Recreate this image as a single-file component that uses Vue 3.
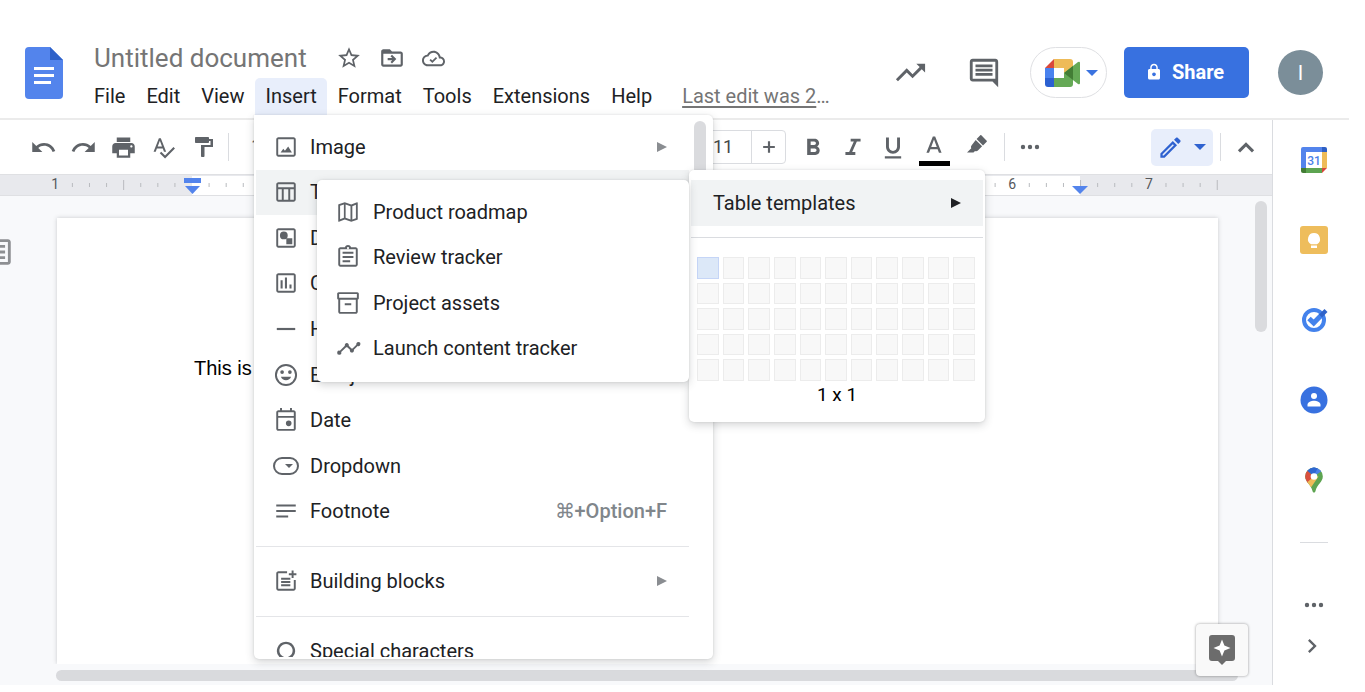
<script setup>
import { h } from 'vue'

const paths = {
  star: 'M22 9.24l-7.19-.62L12 2 9.19 8.63 2 9.24l5.46 4.73L5.82 21 12 17.27 18.18 21l-1.63-7.03L22 9.24zM12 15.4l-3.76 2.27 1-4.28-3.32-2.88 4.38-.38L12 6.1l1.71 4.04 4.38.38-3.32 2.88 1 4.28L12 15.4z',
  move: 'M20 6h-8l-2-2H4c-1.1 0-2 .9-2 2v12c0 1.1.9 2 2 2h16c1.1 0 2-.9 2-2V8c0-1.1-.9-2-2-2zm0 12H4V8h16v10zM12 17l4-4-4-4-1.4 1.4 1.6 1.6H8v2h4.2l-1.6 1.6z',
  cloud: 'M19.35 10.04C18.67 6.59 15.64 4 12 4 9.11 4 6.61 5.64 5.36 8.04 2.35 8.36 0 10.9 0 14c0 3.31 2.69 6 6 6h13c2.76 0 5-2.24 5-5 0-2.64-2.05-4.78-4.65-4.96zM19 18H6c-2.21 0-4-1.79-4-4 0-2.05 1.53-3.76 3.56-3.97l1.07-.11.5-.95C8.08 7.14 9.94 6 12 6c2.62 0 4.88 1.86 5.39 4.43l.3 1.5 1.53.11c1.56.1 2.78 1.41 2.78 2.96 0 1.65-1.35 3-3 3zm-8.2-3.9l-1.7-1.7L7.8 13.7l3 3 5-5-1.3-1.3z',
  trend: 'M16 6l2.29 2.29-4.88 4.88-4-4L2 16.59 3.41 18l6-6 4 4 6.3-6.29L22 12V6z',
  comment: 'M21.99 4c0-1.1-.89-2-1.99-2H4c-1.1 0-2 .9-2 2v12c0 1.1.9 2 2 2h14l4 4-.01-18zM20 4v12H4V4h16zM6 12h12v2H6zm0-3h12v2H6zm0-3h12v2H6z',
  lock: 'M18 8h-1V6c0-2.76-2.24-5-5-5S7 3.24 7 6v2H6c-1.1 0-2 .9-2 2v10c0 1.1.9 2 2 2h12c1.1 0 2-.9 2-2V10c0-1.1-.9-2-2-2zm-6 9.500c-1.400 0-2.500-1.100-2.500-2.500s1.100-2.500 2.500-2.500 2.500 1.100 2.500 2.500-1.100 2.500-2.500 2.500zM15.100 8H8.900V6c0-1.710 1.390-3.100 3.100-3.100s3.100 1.390 3.100 3.100v2z',
  undo: 'M12.5 8c-2.65 0-5.05.99-6.900 2.600L2 7v9h9l-3.620-3.620c1.390-1.160 3.160-1.880 5.120-1.880 3.540 0 6.550 2.310 7.600 5.500l2.370-.780C21.080 11.030 17.150 8 12.500 8z',
  redo: 'M18.4 10.6C16.55 8.99 14.15 8 11.5 8c-4.65 0-8.58 3.03-9.96 7.22L3.9 16c1.05-3.19 4.05-5.5 7.6-5.5 1.95 0 3.73.72 5.12 1.88L13 16h9V7l-3.6 3.6z',
  print: 'M19 8H5c-1.66 0-3 1.34-3 3v6h4v4h12v-4h4v-6c0-1.66-1.34-3-3-3zm-3 11H8v-5h8v5zm3-7c-.55 0-1-.45-1-1s.45-1 1-1 1 .45 1 1-.45 1-1 1zm-1-9H6v4h12V3z',
  spell: 'M12.45 16h2.09L9.43 3H7.57L2.46 16h2.09l1.12-3h5.64l1.14 3zm-6.02-5L8.5 5.48 10.57 11H6.43zm15.16.59l-8.09 8.09L9.83 16l-1.41 1.41 5.09 5.09L23 13l-1.41-1.41z',
  paint: 'M18 4V3c0-.55-.45-1-1-1H5c-.55 0-1 .45-1 1v4c0 .55.45 1 1 1h12c.55 0 1-.45 1-1V6h1.500v4H10v11c0 .55.45 1 1 1h1.500c.55 0 1-.45 1-1v-9H22V4h-4z',
  bold: 'M15.6 10.79c.97-.67 1.65-1.77 1.65-2.79 0-2.26-1.75-4-4-4H7v14h7.04c2.09 0 3.71-1.7 3.71-3.79 0-1.52-.86-2.82-2.15-3.42zM10 6.5h3c.83 0 1.5.67 1.5 1.5s-.67 1.5-1.5 1.5h-3v-3zm3.5 9H10v-3h3.500c.83 0 1.500.67 1.500 1.500s-.67 1.500-1.500 1.500z',
  italic: 'M10 4v2.500h2.700l-4 9H5.500V18h8.500v-2.500h-2.700l4-9H18.500V4z',
  underline: 'M12 17c3.31 0 6-2.69 6-6V3h-2.500v8c0 1.930-1.570 3.500-3.500 3.500S8.500 12.930 8.500 11V3H6v8c0 3.310 2.690 6 6 6zm-7 2v2h14v-2H5z',
  color: 'M11 3L5.5 17h2.25l1.12-3h6.25l1.12 3h2.25L13 3h-2zm-1.38 9L12 5.67 14.38 12H9.62z',
  highlight: 'M16.300 2.300l5.400 5.400c.3.300.3.700 0 1L18 12.400 11.600 6l3.700-3.700c.3-.300.700-.300 1 0zM10.700 6.900l6.400 6.400-4.200 4.200c-.8.800-2 .900-2.900.4L8.500 19.500H2l4.300-4.300c-.5-.900-.4-2.100.4-2.900z',
  dots: 'M5 9.800a2.200 2.200 0 100 4.400 2.200 2.200 0 000-4.400zm7 0a2.200 2.200 0 100 4.400 2.200 2.200 0 000-4.400zm7 0a2.200 2.200 0 100 4.400 2.200 2.200 0 000-4.400z',
  pen: 'M14.060 9.020l.92.920L5.920 19H5v-.920l9.060-9.060M17.660 3c-.25 0-.51.100-.7.290l-1.830 1.830 3.750 3.750 1.830-1.830c.39-.390.39-1.020 0-1.410l-2.340-2.340c-.2-.200-.45-.290-.71-.290zm-3.600 3.190L3 17.250V21h3.750L17.810 9.940l-3.750-3.750z',
  up: 'M12 7.500l-7.500 7.500 2 2L12 11.500l5.500 5.500 2-2z',
  plus: 'M19 13.300h-5.700V19h-2.600v-5.700H5v-2.600h5.700V5h2.600v5.700H19z',
  right: 'M8.590 16.590L13.170 12 8.590 7.410 10 6l6 6-6 6z',
  image: 'M19 3H5c-1.100 0-2 .9-2 2v14c0 1.100.9 2 2 2h14c1.100 0 2-.9 2-2V5c0-1.100-.9-2-2-2zm.2 16.200H4.800V4.800h14.400v14.400zM7 17l2.500-3.500 1.500 2 3-4L17.500 17z',
  table: 'M19 3H5c-1.100 0-2 .9-2 2v14c0 1.100.9 2 2 2h14c1.100 0 2-.9 2-2V5c0-1.100-.9-2-2-2zm.2 1.800v2.900H4.800V4.800zM4.800 9.500h3.300v9.700H4.800zm5.100 9.700V9.500h4.200v9.700zm6 0V9.500h3.300v9.700z',
  drawing: 'M19 3H5c-1.100 0-2 .9-2 2v14c0 1.100.9 2 2 2h14c1.100 0 2-.9 2-2V5c0-1.100-.9-2-2-2zm.2 16.200H4.800V4.800h14.400zM10 6a3.600 3.600 0 100 7.200A3.600 3.600 0 0010 6zm2.300 6.300h5.500v5.500h-5.500z',
  chart: 'M19 3H5c-1.100 0-2 .9-2 2v14c0 1.100.9 2 2 2h14c1.100 0 2-.9 2-2V5c0-1.100-.9-2-2-2zm.2 16.200H4.800V4.800h14.400zM7 9.500h1.900v7.500H7zm4-2.500h1.900v10H11zm4.200 6.300h1.900V17h-1.900z',
  line: 'M3.500 11h17v2h-17z',
  emoji: 'M12 1.800a10.200 10.200 0 100 20.400 10.200 10.200 0 000-20.400zm0 18.600a8.400 8.400 0 110-16.800 8.400 8.400 0 010 16.800zM8.400 7.600a1.700 1.700 0 100 3.400 1.700 1.700 0 000-3.400zm7.200 0a1.700 1.700 0 100 3.400 1.700 1.700 0 000-3.400zM7.300 13.700h9.400c-.7 1.900-2.500 3.200-4.700 3.200s-4-1.300-4.700-3.200z',
  date: 'M19 3h-1.500V1h-1.800v2H8.300V1H6.500v2H5c-1.100 0-2 .9-2 2v15c0 1.100.9 2 2 2h14c1.100 0 2-.9 2-2V5c0-1.100-.9-2-2-2zm.2 17.200H4.800V10h14.400zm0-12H4.800V4.800h14.400zM14.500 12.500a2.600 2.600 0 100 5.200 2.600 2.600 0 000-5.200z',
  footnote: 'M3 6h18v1.800H3zm0 5.100h18v1.800H3zm0 5.100h11v1.800H3z',
  blocks: 'M13 3v1.800H4.800v14.400h14.400V11H21v8c0 1.100-.9 2-2 2H5c-1.100 0-2-.9-2-2V5c0-1.100.9-2 2-2zM17.200 2.200H19v2.600h2.600v1.800H19v2.600h-1.800V6.600h-2.600V4.800h2.600zM7.500 9h8.500v1.800H7.500zm0 3h8.500v1.800H7.500zm0 3h8.500v1.800H7.500z',
  omega: 'M12 4.500a7.300 7.300 0 00-4.500 13V19H4v2h6.500v-4.300a5.300 5.300 0 113 0V21H20v-2h-3.500v-1.500A7.300 7.300 0 0012 4.500z',
  map: 'M20.500 3l-.16.030L15 5.100 9 3 3.360 4.900c-.21.070-.36.250-.36.480V20.500c0 .280.22.500.5.500l.16-.030L9 18.900l6 2.100 5.640-1.900c.21-.070.36-.250.36-.480V3.500c0-.280-.22-.500-.5-.500zM8.200 17.300l-3.500 1.300V6.200l3.500-1.200zm6.100 1.600l-4.500-1.600V5.100l4.500 1.600zm5-1.200L16 18.900V6.700l3.300-1.300z',
  clipboard: 'M19 3h-4.180C14.400 1.840 13.300 1 12 1s-2.400.84-2.820 2H5c-1.100 0-2 .9-2 2v14c0 1.100.9 2 2 2h14c1.100 0 2-.9 2-2V5c0-1.100-.9-2-2-2zm-7-.2a1 1 0 110 2 1 1 0 010-2zm7.200 16.400H4.800V4.800h14.400zM7 7.200h10V9H7zm0 3.900h10v1.800H7zm0 3.900h7v1.800H7z',
  archive: 'M20.500 2h-17C2.500 2 2 2.700 2 3.500v4c0 .6.400 1.100 1 1.300V20c0 1.100.9 2 2 2h14c1.100 0 2-.9 2-2V8.800c.6-.2 1-.7 1-1.300v-4c0-.8-.5-1.500-1.500-1.500zm-1.300 18.200H4.800V9h14.400zM20.200 7.200H3.800V3.800h16.400zM9 12.200h6v1.800H9z',
  timeline: 'M21.500 6.500a1.900 1.900 0 00-1.800 2.500l-3.500 3.500a2 2 0 00-1 0l-2.500-2.500a1.900 1.900 0 10-3.600 0L4.500 14.600a1.900 1.900 0 101.200 1.200L10.300 11.200a2 2 0 001 0l2.500 2.500a1.900 1.900 0 103.600 0L20.900 10.200a1.900 1.900 0 10.6-3.700z',
  outline: 'M19 3H5c-1.100 0-2 .9-2 2v14c0 1.100.9 2 2 2h14c1.100 0 2-.9 2-2V5c0-1.100-.9-2-2-2zm0 16H5V5h14zM7 7h10v2H7zm0 4h10v2H7zm0 4h10v2H7z'
}

const Icon = (props) =>
  h('svg', { viewBox: '0 0 24 24', width: props.size, height: props.size, 'aria-hidden': 'true' },
    [h('path', { d: paths[props.name], fill: 'currentColor', 'fill-rule': 'evenodd' })])
Icon.props = ['name', 'size']

const menus = ['File', 'Edit', 'View', 'Insert', 'Format', 'Tools', 'Extensions', 'Help']
const leftTools = [['undo', 27, 'Undo'], ['redo', 27, 'Redo'], ['print', 27, 'Print'], ['spell', 25, 'Spelling'], ['paint', 24, 'Paint format']]
const formatTools = [['bold', 28, 'Bold'], ['italic', 28, 'Italic'], ['underline', 28, 'Underline']]
const insertItems = [
  { icon: 'image', label: 'Image', arrow: true },
  { icon: 'table', label: 'Table', active: true },
  { icon: 'drawing', label: 'Drawing' },
  { icon: 'chart', label: 'Chart' },
  { icon: 'line', label: 'Horizontal line' },
  { icon: 'emoji', label: 'Emoji' },
  { icon: 'date', label: 'Date' },
  { icon: 'dropdown', label: 'Dropdown' },
  { icon: 'footnote', label: 'Footnote', keys: '⌘+Option+F' }
]
const templates = [
  ['map', 'Product roadmap'],
  ['clipboard', 'Review tracker'],
  ['archive', 'Project assets'],
  ['timeline', 'Launch content tracker']
]

const inch = 136.7
const origin = 192
const ticks = []
for (let n = -7; n <= 60; n++) {
  if (n % 8 !== 0) ticks.push({ x: origin + (n * inch) / 8, tall: n % 4 === 0 })
}
const numbers = [[-1, 1], [1, 1], [2, 2], [3, 3], [4, 4], [5, 5], [6, 6], [7, 7]]
</script>

<template>
  <div class="app">
    <header class="header">
      <svg class="logo" viewBox="0 0 38 52" width="38" height="52" aria-label="Docs home">
        <path d="M4 0h21l13 13v35a4 4 0 0 1-4 4H4a4 4 0 0 1-4-4V4a4 4 0 0 1 4-4z" fill="#5384ec" />
        <path d="M25 0l13 13H25z" fill="#2f62c9" />
        <path d="M9 20h20v3H9zM9 27h20v3H9zM9 34h17v3H9z" fill="#fff" />
      </svg>
      <div class="heading">
        <div class="title-row">
          <h1>Untitled document</h1>
          <button class="plain" aria-label="Star"><Icon name="star" size="26" /></button>
          <button class="plain" aria-label="Move"><Icon name="move" size="26" /></button>
          <button class="plain" aria-label="Document status"><Icon name="cloud" size="23" /></button>
        </div>
        <nav class="menubar">
          <button v-for="m in menus" :key="m" :class="{ open: m === 'Insert' }">{{ m }}</button>
          <a href="#" class="last-edit"><span>Last edit was 2</span>…</a>
        </nav>
      </div>
      <div class="actions">
        <button class="plain" aria-label="Activity"><Icon name="trend" size="35" /></button>
        <button class="plain comments" aria-label="Comments"><Icon name="comment" size="34" /></button>
        <button class="meet" aria-label="Meet">
          <svg viewBox="0 0 36 28" width="36" height="28">
            <path d="M0 9l9-9v9z" fill="#d9473a" />
            <path d="M9 0h16a3 3 0 0 1 3 3v7l-9 4V9H9z" fill="#eebb58" />
            <path d="M0 9h9v10H0z" fill="#4a82ee" />
            <path d="M0 19h9v9H3a3 3 0 0 1-3-3z" fill="#2b60d1" />
            <path d="M9 19h10v-5l9 4v7a3 3 0 0 1-3 3H9z" fill="#65a956" />
            <path d="M19 14L33 3q2-1 2 1v20q0 2-2 1z" fill="#65a956" />
            <path d="M19 14l9-7v14z" fill="#437d35" />
          </svg>
          <svg viewBox="0 0 12 6" width="12" height="6"><path d="M0 0h12L6 6z" fill="#3a73e0" /></svg>
        </button>
        <button class="share"><Icon name="lock" size="18" />Share</button>
        <button class="avatar" aria-label="Account">I</button>
      </div>
    </header>

    <div class="body">
      <main class="workspace">
        <div class="toolbar">
          <button v-for="t in leftTools" :key="t[0]" class="tool" :aria-label="t[2]"><Icon :name="t[0]" :size="t[1]" /></button>
          <i class="rule"></i>
          <div class="zoom-level">100%</div>
          <div class="font-size">
            <input aria-label="Font size" value="11" />
            <button aria-label="Increase font size"><Icon name="plus" size="20" /></button>
          </div>
          <button v-for="t in formatTools" :key="t[0]" class="tool format" :aria-label="t[2]"><Icon :name="t[0]" :size="t[1]" /></button>
          <button class="tool text-color" aria-label="Text color"><Icon name="color" size="28" /><b></b></button>
          <button class="tool highlighter" aria-label="Highlight color"><Icon name="highlight" size="24" /></button>
          <i class="rule"></i>
          <button class="tool" aria-label="More"><Icon name="dots" size="24" /></button>
          <div class="toolbar-end">
            <button class="mode" aria-label="Editing mode"><Icon name="pen" size="27" />
              <svg viewBox="0 0 12 6" width="12" height="6"><path d="M0 0h12L6 6z" fill="#2f62d0" /></svg>
            </button>
            <i class="rule"></i>
            <button class="tool" aria-label="Hide the menus"><Icon name="up" size="26" /></button>
          </div>
        </div>

        <svg class="ruler" width="100%" height="22">
          <rect x="192" y="1" width="888" height="19" fill="#fff" />
          <rect v-for="t in ticks" :key="t.x" :x="t.x - 0.5" :y="t.tall ? 5 : 8" width="1" :height="t.tall ? 10 : 4" fill="#b9bbbf" />
          <text v-for="(n, i) in numbers" :key="i" :x="origin + n[0] * inch" y="14">{{ n[1] }}</text>
          <path d="M184 3h17v5h-17zM185 11h15l-7.500 8zM1072 11h16l-8 8z" fill="#5384ec" />
        </svg>

        <div class="canvas">
          <button class="outline" aria-label="Show outline"><Icon name="outline" size="34" /></button>
          <article class="page"><p>This is</p></article>
          <i class="v-thumb"></i>
          <i class="h-thumb"></i>
          <button class="explore" aria-label="Explore">
            <svg viewBox="0 0 26 30" width="26" height="30">
              <path d="M3 0h20a3 3 0 0 1 3 3v20a3 3 0 0 1-3 3h-6l-4 4-4-4H3a3 3 0 0 1-3-3V3a3 3 0 0 1 3-3z" fill="#6c6c6c" />
              <path d="M13 4.500l2.400 6.100 6.100 2.400-6.100 2.400L13 21.500l-2.400-6.100L4.500 13l6.100-2.400z" fill="#fff" />
            </svg>
          </button>
        </div>
      </main>

      <aside class="side">
        <button aria-label="Calendar">
          <svg viewBox="0 0 26 26" width="26" height="26">
            <path d="M2 0h19v5H5v16H0V2a2 2 0 0 1 2-2z" fill="#5384ec" />
            <path d="M21 0h3a2 2 0 0 1 2 2v3h-5z" fill="#2e5fc4" />
            <path d="M21 5h5v16h-5z" fill="#eebb58" />
            <path d="M0 21h5v5H2a2 2 0 0 1-2-2z" fill="#437d35" />
            <path d="M5 21h16v5H5z" fill="#5da451" />
            <path d="M21 21h5l-5 5z" fill="#d9473a" />
            <path d="M5 5h16v16H5z" fill="#fff" />
            <text x="13" y="17.500">31</text>
          </svg>
        </button>
        <button aria-label="Keep">
          <svg viewBox="0 0 28 28" width="28" height="28">
            <rect width="28" height="28" rx="3" fill="#eebd5c" />
            <path d="M14 7a6 6 0 0 0-3 11.200h6A6 6 0 0 0 14 7zM11 19.500h6v2.500h-6z" fill="#fff" />
          </svg>
        </button>
        <button aria-label="Tasks">
          <svg viewBox="0 0 28 28" width="28" height="28">
            <circle cx="14" cy="14" r="10" fill="none" stroke="#4382ec" stroke-width="4" />
            <path d="M9 12.500l4.700 4.500L23 7.500" fill="none" stroke="#4382ec" stroke-width="5" />
            <path d="M19 8.500l5.500-5.500 3 3-5.500 5.500z" fill="#2f62c9" />
          </svg>
        </button>
        <button aria-label="Contacts">
          <svg viewBox="0 0 28 28" width="28" height="28">
            <circle cx="14" cy="14" r="13.500" fill="#3871e0" />
            <circle cx="14" cy="10" r="3" fill="#fff" />
            <path d="M7.500 20.500v-1.800c0-2.700 4-4 6.500-4s6.500 1.300 6.500 4v1.800z" fill="#fff" />
          </svg>
        </button>
        <button aria-label="Maps">
          <svg viewBox="0 0 18 26" width="18" height="26">
            <defs><clipPath id="pin"><path d="M9 .5a8.800 8.800 0 0 0-8.800 9c0 5.500 5.500 7.500 7.300 14.500.5 2 2.500 2 3 0 1.800-7 7.300-9 7.300-14.500A8.800 8.800 0 0 0 9 .5z" /></clipPath></defs>
            <g clip-path="url(#pin)">
              <path d="M0 0h18v26H0z" fill="#5da451" />
              <path d="M9 9.500L18 3V0H6z" fill="#4a80e8" />
              <path d="M2 0h11L9 9 2 4z" fill="#2f66d0" />
              <path d="M0 2l9 7.500L0 20z" fill="#d9503f" />
              <path d="M0 17L9 9.500h4.500L6 20.500z" fill="#eebb58" />
            </g>
            <circle cx="9" cy="9.500" r="3.300" fill="#fff" />
          </svg>
        </button>
        <hr />
        <button class="more" aria-label="More add-ons"><Icon name="dots" size="24" /></button>
        <button class="collapse" aria-label="Hide side panel"><Icon name="right" size="28" /></button>
      </aside>
    </div>

    <div class="insert-menu">
      <div class="insert-list">
        <div class="rows main-rows">
          <button v-for="i in insertItems" :key="i.label" class="row" :class="{ active: i.active }">
            <span class="icon">
              <svg v-if="i.icon === 'dropdown'" viewBox="0 0 26 18" width="26" height="18">
                <rect x="1" y="1" width="24" height="16" rx="8" fill="none" stroke="currentColor" stroke-width="2" />
                <path d="M12 7h8l-4 4z" fill="currentColor" />
              </svg>
              <Icon v-else :name="i.icon" size="26" />
            </span>
            <span>{{ i.label }}</span>
            <kbd v-if="i.keys">{{ i.keys }}</kbd>
            <svg v-if="i.arrow" class="arrow" viewBox="0 0 10 10" width="10" height="10"><path d="M0 0l10 5-10 5z" fill="currentColor" /></svg>
          </button>
        </div>
        <hr />
        <button class="row">
          <span class="icon"><Icon name="blocks" size="26" /></span>
          <span>Building blocks</span>
          <svg class="arrow" viewBox="0 0 10 10" width="10" height="10"><path d="M0 0l10 5-10 5z" fill="currentColor" /></svg>
        </button>
        <hr />
        <button class="row">
          <span class="icon"><Icon name="omega" size="30" /></span>
          <span>Special characters</span>
        </button>
      </div>
      <i class="menu-thumb"></i>
    </div>

    <div class="table-menu">
      <button class="row active">
        <span>Table templates</span>
        <svg class="arrow" viewBox="0 0 10 10" width="10" height="10"><path d="M0 0l10 5-10 5z" fill="currentColor" /></svg>
      </button>
      <hr />
      <div class="cells"><i v-for="n in 55" :key="n" :class="{ on: n === 1 }"></i></div>
      <div class="size-label">1 x 1</div>
    </div>

    <div class="template-menu rows">
      <button v-for="t in templates" :key="t[0]" class="row">
        <span class="icon"><Icon :name="t[0]" size="26" /></span>
        <span>{{ t[1] }}</span>
      </button>
    </div>
  </div>
</template>

<style>
body { background: #fff; overflow: hidden; }
</style>

<style scoped>
.app {
  position: relative;
  box-sizing: border-box;
  display: flex;
  flex-direction: column;
  height: 100vh;
  padding: 0 16px 7px 0;
  font-family: Roboto, "Liberation Sans", sans-serif;
  font-size: 20px;
  line-height: 24px;
  color: #202124;
}
.app * { box-sizing: border-box; }
svg { display: block; flex: none; }
button {
  border: 0;
  padding: 0;
  margin: 0;
  background: none;
  font: inherit;
  color: inherit;
}
hr { border: 0; margin: 0; }

.header {
  display: flex;
  align-items: flex-start;
  height: 120px;
  flex: none;
  padding-left: 25px;
  border-bottom: 2px solid #ebebeb;
}
.logo { margin-top: 47px; }
.heading { margin: 38px 0 0 20px; }
.title-row { display: flex; align-items: center; height: 40px; gap: 17px; padding-left: 11px; color: #5f6368; }
h1 { margin: 0 12px 0 0; font-size: 26px; line-height: 36px; font-weight: 400; color: #757575; }
.plain { color: #5f6368; }
.menubar { display: flex; align-items: center; }
.menubar button { height: 37px; padding: 0 10px 2px 11px; border-radius: 5px 5px 0 0; }
.menubar .open { background: #e8eefb; }
.last-edit { margin-left: 20px; padding-bottom: 2px; color: #757575; text-decoration: none; }
.last-edit span { text-decoration: underline; text-underline-offset: 3px; }
.actions { display: flex; align-items: center; margin: 47px 26px 0 auto; height: 51px; }
.comments { margin: 0 29px 0 39px; }
.meet {
  display: flex; align-items: center; gap: 5px;
  width: 77px; height: 51px; padding-left: 14px;
  border: 1px solid #dfe0e3; border-radius: 26px;
}
.share {
  display: flex; align-items: center; justify-content: center; gap: 9px;
  width: 125px; height: 51px; margin: 0 29px 0 17px; padding: 0 4px 2px 0;
  border-radius: 5px; background: #3871e0; color: #fff; font-weight: 700;
}
.avatar { width: 45px; height: 45px; border-radius: 50%; background: #7b8e99; color: #fff; }

.body { display: flex; flex: 1; min-height: 0; }
.workspace { display: flex; flex-direction: column; flex: 1; min-width: 0; }
.toolbar { display: flex; align-items: center; height: 54px; flex: none; padding-left: 23px; color: #5f6368; }
.tool { display: flex; align-items: center; justify-content: center; width: 40px; height: 40px; flex: none; }
.rule { width: 1px; height: 28px; flex: none; margin: 0 5px; background: #dadce0; }
.zoom-level { width: 460px; flex: none; padding-left: 17px; }
.font-size { display: flex; flex: none; height: 34px; margin-right: 7px; border: 1px solid #dadce0; border-radius: 4px; }
.font-size input { width: 56px; border: 0; padding: 0; text-align: center; font: inherit; font-size: 18px; color: #444746; background: none; }
.font-size button { display: flex; align-items: center; justify-content: center; width: 34px; border-left: 1px solid #dadce0; }
.format { padding-top: 2px; }
.text-color { flex-direction: column; width: 42px; padding-top: 4px; }
.text-color b { width: 31px; height: 5px; background: #000; }
.highlighter { width: 44px; padding-bottom: 4px; }
.toolbar-end { display: flex; align-items: center; margin-left: auto; padding-right: 6px; }
.mode { display: flex; align-items: center; gap: 10px; width: 62px; height: 37px; margin-right: 2px; padding-left: 6px; border-radius: 5px; background: #e8eefb; color: #2f62d0; }
.ruler { height: 22px; background: #e8e9ed; border-top: 1px solid #dfe0e3; border-bottom: 1px solid #dfe0e3; }
.ruler text { font-size: 14px; text-anchor: middle; fill: #55585c; }

.canvas { position: relative; flex: 1; min-height: 0; padding: 22px 54px 21px 57px; background: #f8f9fb; overflow: hidden; }
.page { height: 100%; background: #fff; box-shadow: 0 0 4px rgba(60, 64, 67, 0.25); padding: 138px 0 0 137px; clip-path: inset(-5px -8px 0 -8px); }
.page p { margin: 0; font-family: "Liberation Sans", Arial, sans-serif; color: #000; }
.outline { position: absolute; left: -19px; top: 39px; color: #8d8f92; }
.v-thumb { position: absolute; right: 5px; top: 5px; width: 12px; height: 131px; border-radius: 6px; background: #dadbde; }
.h-thumb { position: absolute; left: 56px; right: 34px; bottom: 4px; height: 11px; border-radius: 6px; background: #d9dadd; }
.explore {
  position: absolute; right: 24px; bottom: 9px; width: 52px; height: 52px;
  display: flex; align-items: center; justify-content: center;
  border-radius: 4px; background: #f9f9f9; box-shadow: 0 0 3px rgba(0, 0, 0, 0.4);
}

.side { display: flex; flex-direction: column; align-items: center; width: 77px; flex: none; padding: 0 0 0 5px; border-left: 1px solid #dadce0; color: #5f6368; }
.side button { display: flex; align-items: center; justify-content: center; height: 80px; flex: none; }
.side text { font-size: 12px; font-weight: 500; text-anchor: middle; fill: #4a80e8; }
.side hr { width: 28px; height: 1px; flex: none; margin: 22px 0 42px; background: #dadce0; }
.side .more { height: 40px; }
.side .collapse { height: 42px; margin-right: 3px; }

.insert-menu, .table-menu, .template-menu {
  position: absolute;
  background: #fff;
  border-radius: 5px;
  box-shadow: 0 3px 9px rgba(60, 64, 67, 0.22), 0 0 2px rgba(60, 64, 67, 0.15);
}
.row { display: flex; align-items: center; width: 100%; height: 46px; text-align: left; }
.rows { display: grid; grid-auto-rows: 1fr; }
.rows .row { height: auto; min-height: 0; }
.active { background: #f1f3f4; }
.icon { display: flex; align-items: center; justify-content: center; width: 26px; flex: none; margin-right: 11px; color: #5f6368; }
.arrow { margin-left: auto; color: #8a8d91; }

.insert-menu { left: 254px; top: 115px; width: 459px; height: 544px; padding: 0 24px 2px 2px; border-top-left-radius: 0; }
.insert-list { height: 100%; padding-top: 9px; overflow: hidden; }
.main-rows { height: 410px; }
.insert-list .row { padding: 0 22px 0 17px; }
.insert-list hr { height: 1px; margin: 12px 0 11px; background: #e4e5e8; }
kbd { margin-left: auto; font: inherit; font-weight: 500; color: #80868b; }
.menu-thumb { position: absolute; right: 7px; top: 6px; width: 12px; height: 200px; border-radius: 6px; background: #dadbde; }

.table-menu { left: 689px; top: 170px; width: 296px; height: 252px; padding: 10px 2px 0; }
.table-menu .row { padding: 0 22px; }
.table-menu .arrow { color: #202124; }
.table-menu hr { height: 1px; margin: 11px 0 19px; background: #dadce0; }
.cells { display: grid; grid-template-columns: repeat(11, 1fr); grid-auto-rows: 1fr; gap: 4px; width: 278px; height: 124px; margin-left: 6px; }
.cells i { background: #f8f8f8; border: 1px solid #ececec; }
.cells .on { background: #dce8f8; border-color: #c5d5f7; }
.size-label { margin-top: 2px; text-align: center; font-size: 19px; color: #000; }

.template-menu { left: 317px; top: 180px; width: 372px; height: 202px; padding: 9px 0 11px; }
.template-menu .row { padding-left: 18px; }
.template-menu .icon { margin-right: 12px; }
</style>
